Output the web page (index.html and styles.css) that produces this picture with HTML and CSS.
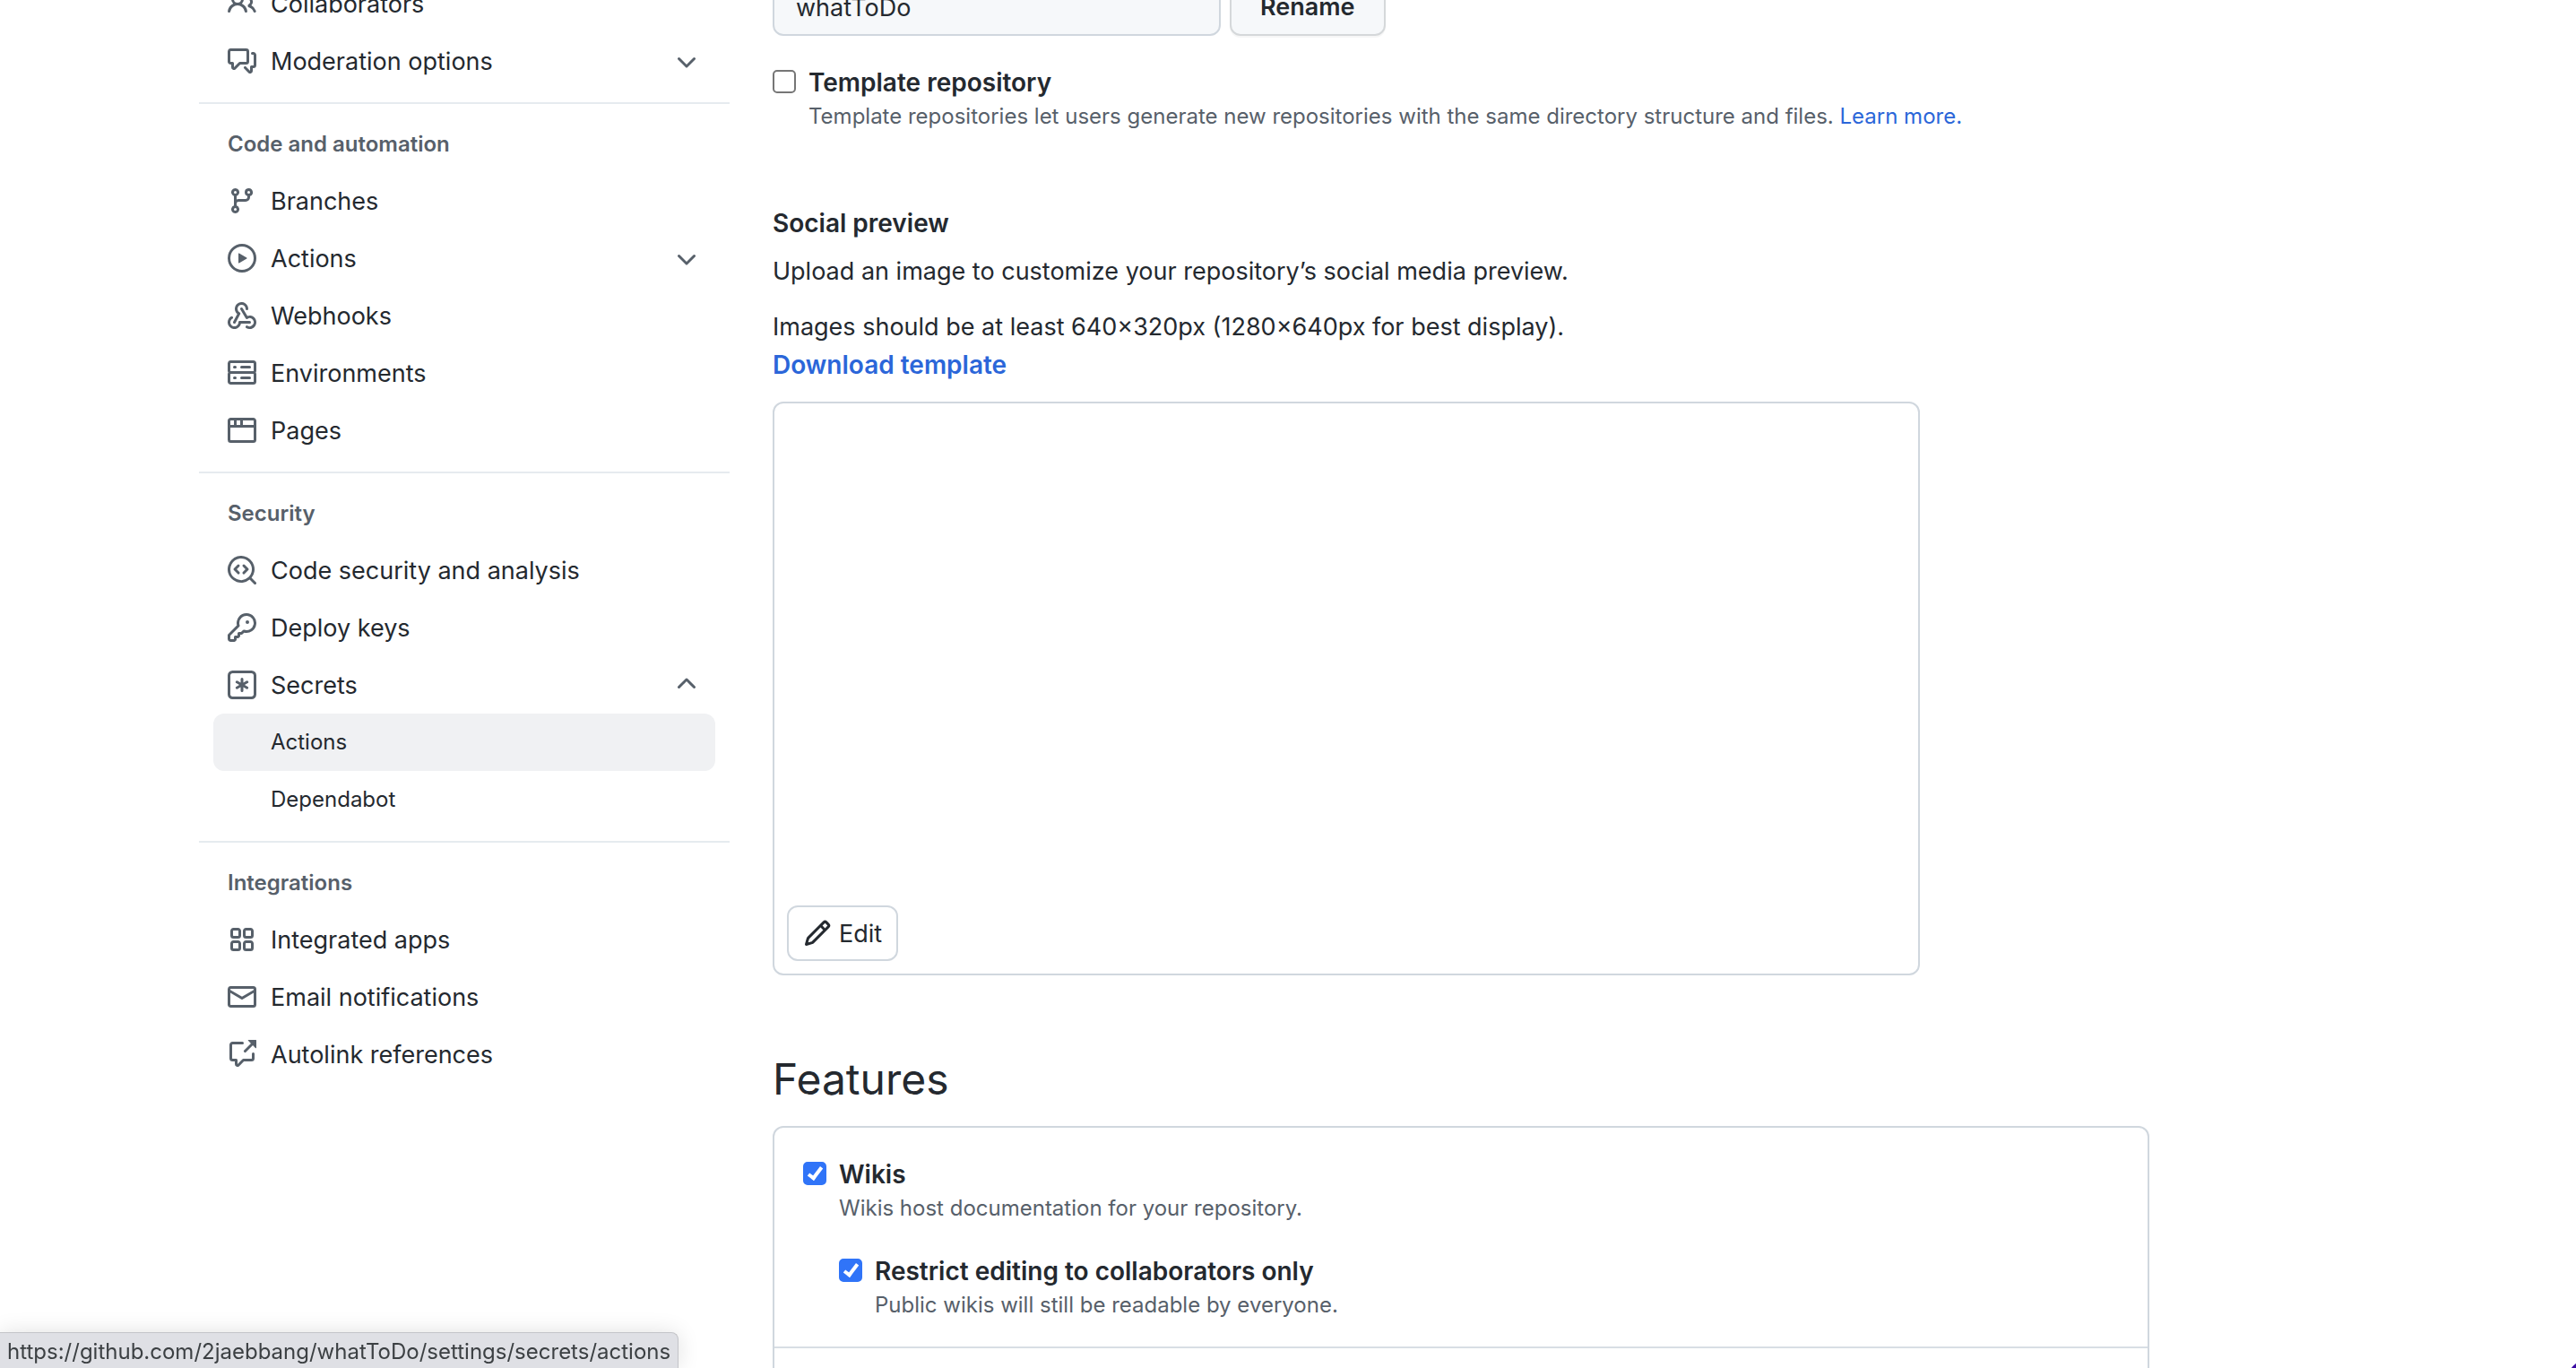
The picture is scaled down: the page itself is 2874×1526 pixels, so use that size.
FILE: index.html
```html
<!DOCTYPE html>
<html lang="en">
<head>
  <meta charset="UTF-8" />
  <meta name="viewport" content="width=device-width, initial-scale=1.0" />
  <title>Settings · whatToDo</title>
  <link rel="stylesheet" href="styles.css">
</head>
<body>
  <div class="layout">

    <!-- Sidebar -->
    <nav class="sidebar" aria-label="Repository settings">
      <ul class="nav-list">
        <li>
          <a class="nav-item" href="#collaborators">
            <svg class="icon" viewBox="0 0 16 16"><path fill-rule="evenodd" d="M5.5 3.5a2 2 0 100 4 2 2 0 000-4zM2 5.5a3.5 3.5 0 115.898 2.549 5.507 5.507 0 013.034 4.084.75.75 0 11-1.482.235 4.001 4.001 0 00-7.9 0 .75.75 0 01-1.482-.236A5.507 5.507 0 013.102 8.05 3.49 3.49 0 012 5.5zM11 4a.75.75 0 100 1.5 1.5 1.5 0 01.666 2.844.75.75 0 00-.416.672v.352a.75.75 0 00.574.73c1.2.289 2.162 1.2 2.522 2.372a.75.75 0 101.434-.44 5.01 5.01 0 00-2.56-3.012A3 3 0 0011 4z"/></svg>
            <span>Collaborators</span>
          </a>
        </li>
        <li>
          <button class="nav-item" type="button" aria-expanded="false">
            <svg class="icon" viewBox="0 0 16 16"><path fill-rule="evenodd" d="M1.5 2.75a.25.25 0 01.25-.25h8.5a.25.25 0 01.25.25v5.5a.25.25 0 01-.25.25h-3.5a.75.75 0 00-.53.22L3.5 11.44V9.25a.75.75 0 00-.75-.75h-1a.25.25 0 01-.25-.25v-5.5zM1.75 1A1.75 1.75 0 000 2.75v5.5C0 9.216.784 10 1.75 10H2v1.543a1.457 1.457 0 002.487 1.03L7.061 10h3.189A1.75 1.75 0 0012 8.25v-5.5A1.75 1.75 0 0010.25 1h-8.5zM14.5 4.75a.25.25 0 00-.25-.25h-.5a.75.75 0 110-1.5h.5c.966 0 1.75.784 1.75 1.75v5.5A1.75 1.75 0 0114.25 12H14v1.543a1.457 1.457 0 01-2.487 1.03L9.22 12.28a.75.75 0 111.06-1.06l2.22 2.22v-2.19a.75.75 0 01.75-.75h1a.25.25 0 00.25-.25v-5.5z"/></svg>
            <span>Moderation options</span>
            <svg class="icon chevron" viewBox="0 0 16 16"><path d="M12.78 6.22a.75.75 0 010 1.06l-4.25 4.25a.75.75 0 01-1.06 0L3.22 7.28a.75.75 0 011.06-1.06L8 9.94l3.72-3.72a.75.75 0 011.06 0z"/></svg>
          </button>
        </li>
      </ul>

      <section class="nav-section">
        <h3 class="nav-title">Code and automation</h3>
        <ul class="nav-list">
          <li>
            <a class="nav-item" href="#branches">
              <svg class="icon" viewBox="0 0 16 16"><path fill-rule="evenodd" d="M11.75 2.5a.75.75 0 100 1.5.75.75 0 000-1.5zm-2.25.75a2.25 2.25 0 113 2.122V6A2.5 2.5 0 0110 8.5H6a1 1 0 00-1 1v1.128a2.251 2.251 0 11-1.5 0V5.372a2.25 2.25 0 111.5 0v1.836A2.492 2.492 0 016 7h4a1 1 0 001-1v-.628A2.25 2.25 0 019.5 3.25zM4.25 12a.75.75 0 100 1.5.75.75 0 000-1.5zM3.5 3.25a.75.75 0 111.5 0 .75.75 0 01-1.5 0z"/></svg>
              <span>Branches</span>
            </a>
          </li>
          <li>
            <button class="nav-item" type="button" aria-expanded="false">
              <svg class="icon" viewBox="0 0 16 16"><path fill-rule="evenodd" d="M1.5 8a6.5 6.5 0 1113 0 6.5 6.5 0 01-13 0zM8 0a8 8 0 100 16A8 8 0 008 0zM6.379 5.227A.25.25 0 006 5.442v5.117a.25.25 0 00.379.214l4.264-2.559a.25.25 0 000-.428L6.379 5.227z"/></svg>
              <span>Actions</span>
              <svg class="icon chevron" viewBox="0 0 16 16"><path d="M12.78 6.22a.75.75 0 010 1.06l-4.25 4.25a.75.75 0 01-1.06 0L3.22 7.28a.75.75 0 011.06-1.06L8 9.94l3.72-3.72a.75.75 0 011.06 0z"/></svg>
            </button>
          </li>
          <li>
            <a class="nav-item" href="#webhooks">
              <svg class="icon" viewBox="0 0 16 16"><path d="M5.5 4.25a2.25 2.25 0 014.5 0 .75.75 0 001.5 0 3.75 3.75 0 10-6.14 2.889l-2.272 4.258a.75.75 0 001.324.706L7 7.25a.75.75 0 00-.309-1.015A2.25 2.25 0 015.5 4.25z"/><path d="M7.364 3.607a.75.75 0 011.03.257l2.608 4.349a3.75 3.75 0 11-.628 6.785.75.75 0 01.752-1.299 2.25 2.25 0 10-.033-3.88.75.75 0 01-1.03-.256L7.107 4.636a.75.75 0 01.257-1.03z"/><path d="M2.9 8.776A.75.75 0 012.625 9.8 2.25 2.25 0 106 11.75a.75.75 0 01.75-.751h5.5a.75.75 0 010 1.5H7.425a3.751 3.751 0 11-5.55-3.998.75.75 0 011.024.274z"/></svg>
              <span>Webhooks</span>
            </a>
          </li>
          <li>
            <a class="nav-item" href="#environments">
              <svg class="icon" viewBox="0 0 16 16"><path fill-rule="evenodd" d="M1.75 1A1.75 1.75 0 000 2.75v4c0 .372.116.717.314 1a1.742 1.742 0 00-.314 1v4c0 .966.784 1.75 1.75 1.75h12.5A1.75 1.75 0 0016 12.75v-4c0-.372-.116-.717-.314-1 .198-.283.314-.628.314-1v-4A1.75 1.75 0 0014.25 1H1.75zm0 7.5a.25.25 0 00-.25.25v4c0 .138.112.25.25.25h12.5a.25.25 0 00.25-.25v-4a.25.25 0 00-.25-.25H1.75zM1.5 2.75a.25.25 0 01.25-.25h12.5a.25.25 0 01.25.25v4a.25.25 0 01-.25.25H1.75a.25.25 0 01-.25-.25v-4zm5.5 2A.75.75 0 017.75 4h4.5a.75.75 0 010 1.5h-4.5A.75.75 0 017 4.75zM7.75 10a.75.75 0 000 1.5h4.5a.75.75 0 000-1.5h-4.5zM3 4.75A.75.75 0 013.75 4h.5a.75.75 0 010 1.5h-.5A.75.75 0 013 4.75zM3.75 10a.75.75 0 000 1.5h.5a.75.75 0 000-1.5h-.5z"/></svg>
              <span>Environments</span>
            </a>
          </li>
          <li>
            <a class="nav-item" href="#pages">
              <svg class="icon" viewBox="0 0 16 16"><path fill-rule="evenodd" d="M0 2.75C0 1.784.784 1 1.75 1h12.5c.966 0 1.75.784 1.75 1.75v10.5A1.75 1.75 0 0114.25 15H1.75A1.75 1.75 0 010 13.25V2.75zm1.75-.25a.25.25 0 00-.25.25V5h2V2.5H1.75zM5 2.5V5h2V2.5H5zm3.5 0V5h6V2.75a.25.25 0 00-.25-.25H8.5zm6 4h-13v6.75c0 .138.112.25.25.25h12.5a.25.25 0 00.25-.25V6.5z"/></svg>
              <span>Pages</span>
            </a>
          </li>
        </ul>
      </section>

      <section class="nav-section">
        <h3 class="nav-title">Security</h3>
        <ul class="nav-list">
          <li>
            <a class="nav-item" href="#security">
              <svg class="icon" viewBox="0 0 16 16"><path d="M8.47 4.97a.75.75 0 000 1.06L9.94 7.5 8.47 8.97a.75.75 0 101.06 1.06l2-2a.75.75 0 000-1.06l-2-2a.75.75 0 00-1.06 0zM6.53 6.03a.75.75 0 00-1.06-1.06l-2 2a.75.75 0 000 1.06l2 2a.75.75 0 101.06-1.06L5.06 7.5l1.47-1.47z"/><path fill-rule="evenodd" d="M12.246 13.307a7.5 7.5 0 111.06-1.06l2.474 2.473a.75.75 0 11-1.06 1.06l-2.474-2.473zM1.5 7.5a6 6 0 1110.386 4.094.75.75 0 00-.292.293A6 6 0 011.5 7.5z"/></svg>
              <span>Code security and analysis</span>
            </a>
          </li>
          <li>
            <a class="nav-item" href="#keys">
              <svg class="icon" viewBox="0 0 16 16"><path fill-rule="evenodd" d="M6.5 5.5a4 4 0 112.731 3.795.75.75 0 00-.768.18L7.44 10.5H6.25a.75.75 0 00-.75.75v1.19l-.06.06H4.25a.75.75 0 00-.75.75v1.19l-.06.06H1.75a.25.25 0 01-.25-.25v-1.69l5.024-5.023a.75.75 0 00.181-.768A3.995 3.995 0 016.5 5.5zm4-5.5a5.5 5.5 0 00-5.348 6.788L.22 11.72a.75.75 0 00-.22.53v2C0 15.216.784 16 1.75 16h2a.75.75 0 00.53-.22l.5-.5a.75.75 0 00.22-.53V14h.75a.75.75 0 00.53-.22l.5-.5a.75.75 0 00.22-.53V12h.75a.75.75 0 00.53-.22l.932-.932A5.5 5.5 0 1010.5 0zm.5 6a1 1 0 100-2 1 1 0 000 2z"/></svg>
              <span>Deploy keys</span>
            </a>
          </li>
          <li>
            <button class="nav-item" type="button" aria-expanded="true">
              <svg class="icon" viewBox="0 0 16 16"><path fill-rule="evenodd" d="M0 2.75A2.75 2.75 0 012.75 0h10.5A2.75 2.75 0 0116 2.75v10.5A2.75 2.75 0 0113.25 16H2.75A2.75 2.75 0 010 13.25V2.75zM2.75 1.5c-.69 0-1.25.56-1.25 1.25v10.5c0 .69.56 1.25 1.25 1.25h10.5c.69 0 1.25-.56 1.25-1.25V2.75c0-.69-.56-1.25-1.25-1.25H2.75z"/><path d="M8 4a.75.75 0 01.75.75V6.7l1.69-.975a.75.75 0 01.75 1.3L9.5 8l1.69.976a.75.75 0 01-.75 1.298L8.75 9.3v1.951a.75.75 0 01-1.5 0V9.299l-1.69.976a.75.75 0 01-.75-1.3L6.5 8l-1.69-.975a.75.75 0 01.75-1.3l1.69.976V4.75A.75.75 0 018 4z"/></svg>
              <span>Secrets</span>
              <svg class="icon chevron" viewBox="0 0 16 16"><path d="M12.78 6.22a.75.75 0 010 1.06l-4.25 4.25a.75.75 0 01-1.06 0L3.22 7.28a.75.75 0 011.06-1.06L8 9.94l3.72-3.72a.75.75 0 011.06 0z"/></svg>
            </button>
            <ul class="nav-list">
              <li><a class="nav-item nav-subitem is-hovered" href="#secrets-actions">Actions</a></li>
              <li><a class="nav-item nav-subitem" href="#secrets-dependabot">Dependabot</a></li>
            </ul>
          </li>
        </ul>
      </section>

      <section class="nav-section">
        <h3 class="nav-title">Integrations</h3>
        <ul class="nav-list">
          <li>
            <a class="nav-item" href="#installations">
              <svg class="icon" viewBox="0 0 16 16"><path fill-rule="evenodd" d="M1.5 3.25c0-.966.784-1.75 1.75-1.75h2.5c.966 0 1.75.784 1.75 1.75v2.5A1.75 1.75 0 015.75 7.5h-2.5A1.75 1.75 0 011.5 5.75v-2.5zM3.25 3a.25.25 0 00-.25.25v2.5c0 .138.112.25.25.25h2.5A.25.25 0 006 5.75v-2.5A.25.25 0 005.75 3h-2.5zM1.5 10.25c0-.966.784-1.75 1.75-1.75h2.5c.966 0 1.75.784 1.75 1.75v2.5a1.75 1.75 0 01-1.75 1.75h-2.5a1.75 1.75 0 01-1.75-1.75v-2.5zM3.25 10a.25.25 0 00-.25.25v2.5c0 .138.112.25.25.25h2.5a.25.25 0 00.25-.25v-2.5a.25.25 0 00-.25-.25h-2.5zM8.5 3.25c0-.966.784-1.75 1.75-1.75h2.5c.966 0 1.75.784 1.75 1.75v2.5a1.75 1.75 0 01-1.75 1.75h-2.5A1.75 1.75 0 018.5 5.75v-2.5zM10.25 3a.25.25 0 00-.25.25v2.5c0 .138.112.25.25.25h2.5a.25.25 0 00.25-.25v-2.5a.25.25 0 00-.25-.25h-2.5zM8.5 10.25c0-.966.784-1.75 1.75-1.75h2.5c.966 0 1.75.784 1.75 1.75v2.5a1.75 1.75 0 01-1.75 1.75h-2.5a1.75 1.75 0 01-1.75-1.75v-2.5zM10.25 10a.25.25 0 00-.25.25v2.5c0 .138.112.25.25.25h2.5a.25.25 0 00.25-.25v-2.5a.25.25 0 00-.25-.25h-2.5z"/></svg>
              <span>Integrated apps</span>
            </a>
          </li>
          <li>
            <a class="nav-item" href="#notifications">
              <svg class="icon" viewBox="0 0 16 16"><path fill-rule="evenodd" d="M1.75 2A1.75 1.75 0 000 3.75v8.5C0 13.216.784 14 1.75 14h12.5A1.75 1.75 0 0016 12.25v-8.5A1.75 1.75 0 0014.25 2H1.75zM14.5 4.07v-.32a.25.25 0 00-.25-.25H1.75a.25.25 0 00-.25.25v.32L8 7.88l6.5-3.81zm-13 1.74v6.441c0 .138.112.25.25.25h12.5a.25.25 0 00.25-.25V5.809L8.38 9.397a.75.75 0 01-.76 0L1.5 5.809z"/></svg>
              <span>Email notifications</span>
            </a>
          </li>
          <li>
            <a class="nav-item" href="#autolinks">
              <svg class="icon" viewBox="0 0 16 16"><path fill-rule="evenodd" d="M16 .25v4.146a.25.25 0 01-.427.177L14.03 3.03l-3.75 3.75a.75.75 0 11-1.06-1.06l3.75-3.75L11.427.427A.25.25 0 0111.604 0h4.146a.25.25 0 01.25.25zM2.75 2.5a.25.25 0 00-.25.25v7.5c0 .138.112.25.25.25h2a.75.75 0 01.75.75v2.19l2.72-2.72a.75.75 0 01.53-.22h4.5a.25.25 0 00.25-.25v-2.5a.75.75 0 111.5 0v2.5A1.75 1.75 0 0113.25 12H9.06l-2.573 2.573A1.457 1.457 0 014 13.543V12H2.75A1.75 1.75 0 011 10.25v-7.5C1 1.784 1.784 1 2.75 1h5.5a.75.75 0 010 1.5h-5.5z"/></svg>
              <span>Autolink references</span>
            </a>
          </li>
        </ul>
      </section>
    </nav>

    <!-- Content -->
    <main class="content">
      <form class="rename-form">
        <input class="text-input" type="text" value="whatToDo" aria-label="Repository name">
        <button class="btn" type="button">Rename</button>
      </form>

      <div class="check-row template-row">
        <input type="checkbox" id="template">
        <div>
          <label for="template">Template repository</label>
          <p class="note">Template repositories let users generate new repositories with the same directory structure and files. <a href="#learn-more">Learn more.</a></p>
        </div>
      </div>

      <section class="social">
        <h4>Social preview</h4>
        <p>Upload an image to customize your repository’s social media preview.</p>
        <p>Images should be at least 640×320px (1280×640px for best display). <a class="download" href="#template">Download template</a></p>
        <div class="preview">
          <button class="edit-btn" type="button">
            <svg class="icon" viewBox="0 0 16 16"><path fill-rule="evenodd" d="M11.013 1.427a1.75 1.75 0 012.474 0l1.086 1.086a1.75 1.75 0 010 2.474l-8.61 8.61c-.21.21-.47.364-.756.445l-3.251.93a.75.75 0 01-.927-.928l.929-3.25a1.75 1.75 0 01.445-.758l8.61-8.61zm1.414 1.06a.25.25 0 00-.354 0L10.811 3.75l1.439 1.44 1.263-1.263a.25.25 0 000-.354l-1.086-1.086zM11.189 6.25L9.75 4.81l-6.286 6.287a.25.25 0 00-.064.108l-.558 1.953 1.953-.558a.249.249 0 00.108-.064l6.286-6.286z"/></svg>
            <span>Edit</span>
          </button>
        </div>
      </section>

      <section class="features">
        <h2>Features</h2>
        <div class="box">
          <div class="box-row">
            <div class="check-row">
              <input type="checkbox" id="wikis" checked>
              <div>
                <label for="wikis">Wikis</label>
                <p class="note">Wikis host documentation for your repository.</p>
              </div>
            </div>
            <div class="check-row nested">
              <input type="checkbox" id="restrict" checked>
              <div>
                <label for="restrict">Restrict editing to collaborators only</label>
                <p class="note">Public wikis will still be readable by everyone.</p>
              </div>
            </div>
          </div>
          <div class="box-row"></div>
        </div>
      </section>
    </main>
  </div>

  <!-- Link target shown while hovering the sidebar -->
  <div class="status-bubble">https://github.com/2jaebbang/whatToDo/settings/secrets/actions</div>
  <div class="corner-widget"></div>
</body>
</html>
```
FILE: styles.css
```css
:root {
  --fg: #24292f;
  --fg-muted: #57606a;
  --accent: #2b66d9;
  --border: #d0d7de;
  --border-muted: #e6ebef;
  --canvas-subtle: #f6f8fa;
}

*, *::before, *::after {
  box-sizing: border-box;
}

body {
  margin: 0;
  height: 100vh;
  overflow: hidden;
  font-family: Inter, "Liberation Sans", sans-serif;
  font-size: 27px;
  line-height: 42px;
  color: var(--fg);
  background: #fff;
}

h2, h3, h4, p, ul {
  margin: 0;
  padding: 0;
}

a {
  color: var(--accent);
  text-decoration: none;
}

button, input {
  font: inherit;
  color: inherit;
}

.layout {
  display: flex;
  gap: 48px;
  max-width: 2558px;
  /* page is scrolled part-way through the first row */
  margin: -28px auto 0;
  padding: 0 64px;
}

.icon {
  flex: none;
  width: 32px;
  height: 32px;
  fill: currentColor;
}

/* Sidebar */
.sidebar {
  flex: none;
  width: 592px;
}

.nav-list {
  list-style: none;
}

.sidebar > .nav-list,
.nav-section .nav-list {
  padding: 0 16px;
}

.nav-section .nav-list .nav-list {
  padding: 0;
}

.nav-section {
  margin-top: 14px;
  padding-top: 24px;
  border-top: 2px solid var(--border-muted);
}

.nav-title {
  padding: 0 32px 10px;
  font-size: 24px;
  font-weight: 600;
  color: var(--fg-muted);
}

.nav-item {
  display: flex;
  align-items: center;
  gap: 16px;
  width: 100%;
  height: 64px;
  padding: 0 16px;
  border: 0;
  border-radius: 12px;
  background: none;
  color: var(--fg);
  text-align: left;
}

.nav-item span,
.edit-btn span {
  padding-top: 2px;
}

.nav-item .icon {
  color: var(--fg-muted);
}

.nav-item .chevron {
  margin-left: auto;
}

.nav-item[aria-expanded="true"] .chevron {
  transform: rotate(180deg);
}

.nav-subitem {
  padding-left: 64px;
  font-size: 24px;
}

.nav-item:hover,
.nav-item.is-hovered {
  background: #f0f1f3;
}

/* Content */
.content {
  flex: 1;
  min-width: 0;
  max-width: 1536px;
  padding-top: 4px;
}

.rename-form {
  display: flex;
  gap: 10px;
}

.text-input {
  width: 500px;
  height: 64px;
  padding: 0 24px;
  border: 2px solid var(--border);
  border-radius: 12px;
  background: var(--canvas-subtle);
}

.btn {
  height: 64px;
  padding: 0 32px;
  border: 2px solid #d5d8da;
  border-radius: 12px;
  background: var(--canvas-subtle);
  box-shadow: 0 2px 0 rgba(27, 31, 36, 0.04);
  font-weight: 600;
}

.check-row {
  display: flex;
  gap: 14px;
}

.check-row input {
  appearance: none;
  position: relative;
  flex: none;
  width: 26px;
  height: 26px;
  margin: 8px 0 0;
  border: 2px solid #767676;
  border-radius: 5px;
  background: #fff;
}

.check-row input:checked {
  border-color: #3074f8;
  background: #3074f8;
}

.check-row input:checked::after {
  content: "";
  position: absolute;
  top: 1px;
  left: 7px;
  width: 9px;
  height: 17px;
  border: solid #fff;
  border-width: 0 4px 4px 0;
  transform: rotate(37deg);
}

.check-row label {
  display: block;
  font-size: 28px;
  font-weight: 600;
  line-height: 44px;
}

.note {
  font-size: 24px;
  line-height: 32px;
  color: var(--fg-muted);
}

.template-row {
  margin-top: 30px;
}

.social {
  margin-top: 82px;
}

.social h4 {
  margin-bottom: 12px;
  font-size: 28px;
  font-weight: 600;
}

.social p {
  margin-bottom: 20px;
}

.download {
  display: block;
  font-size: 28px;
  font-weight: 600;
}

.preview {
  display: flex;
  align-items: flex-end;
  max-width: 1280px;
  height: 640px;
  padding: 14px;
  border: 2px solid var(--border);
  border-radius: 12px;
}

.edit-btn {
  display: flex;
  align-items: center;
  gap: 8px;
  height: 62px;
  padding: 0 16px;
  border: 2px solid var(--border);
  border-radius: 12px;
  background: #fff;
}

.features {
  margin-top: 80px;
}

.features h2 {
  margin-bottom: 16px;
  font-size: 48px;
  font-weight: 400;
  line-height: 72px;
}

.box {
  border: 2px solid var(--border);
  border-radius: 12px;
}

.box-row {
  min-height: 120px;
  padding: 30px 32px;
}

.box-row + .box-row {
  border-top: 2px solid #d8dee4;
}

.nested {
  margin-top: 32px;
  padding-left: 40px;
}

/* Overlays */
.status-bubble {
  position: fixed;
  left: 0;
  bottom: 0;
  height: 40px;
  padding: 0 8px;
  border-top: 1px solid #c4c5c9;
  border-right: 1px solid #c4c5c9;
  border-top-right-radius: 8px;
  background: #dfe0e5;
  box-shadow: 0 0 24px rgba(0, 0, 0, 0.12);
  color: #3c4043;
  font-size: 24px;
  line-height: 42px;
}

.corner-widget {
  position: fixed;
  right: -65px;
  bottom: -66px;
  width: 80px;
  height: 80px;
  border-radius: 50%;
  background: #3a0ca3;
}
```
